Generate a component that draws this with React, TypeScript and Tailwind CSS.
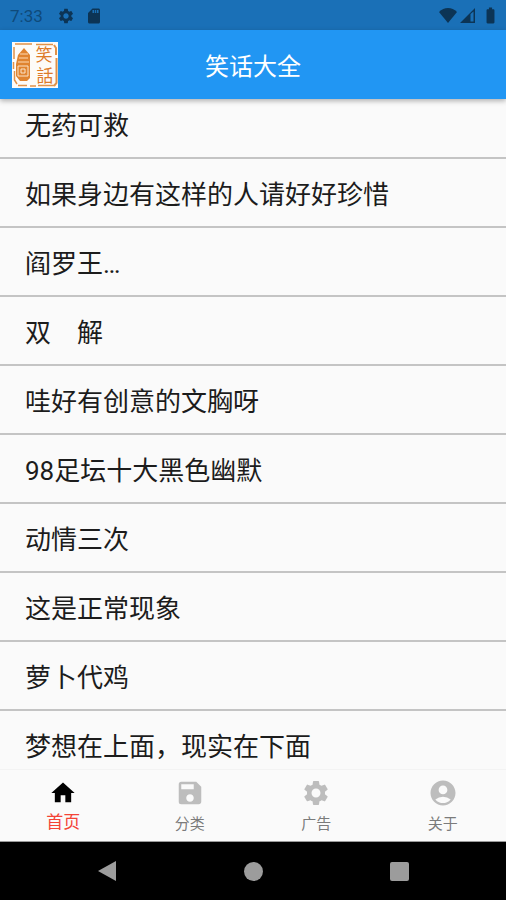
import { useState } from "react";
import { MdAccountCircle, MdBatteryFull, MdHome, MdSave, MdSdStorage, MdSettings } from "react-icons/md";

const jokes = [
  "无药可救",
  "如果身边有这样的人请好好珍惜",
  "阎罗王…",
  "双　解",
  "哇好有创意的文胸呀",
  "98足坛十大黑色幽默",
  "动情三次",
  "这是正常现象",
  "萝卜代鸡",
  "梦想在上面，现实在下面",
];

const tabs = [
  { label: "首页", Icon: MdHome },
  { label: "分类", Icon: MdSave },
  { label: "广告", Icon: MdSettings },
  { label: "关于", Icon: MdAccountCircle },
];

function StatusBar() {
  return (
    <div className="flex h-[30px] shrink-0 items-center bg-[#1a70b7] px-2.5 pt-px text-[#0c3455]">
      <span className="text-[17px] leading-5 text-[#0f4a7a]">7:33</span>
      <MdSettings className="ml-3.5 size-[18px]" />
      <MdSdStorage className="ml-2.5 size-[18px]" />
      <div className="ml-auto flex items-center">
        <svg viewBox="0 0 18 15" className="h-[15px] w-[18px]" fill="currentColor">
          <path d="M9 15 0 4C5-1.2 13-1.2 18 4Z" />
        </svg>
        <svg viewBox="0 0 15 15" className="ml-[3px] size-[15px]">
          <path fillRule="evenodd" fill="currentColor" d="M15 0V15H0ZM10.5 6V13.5H13.5V3.5Z" />
        </svg>
        <MdBatteryFull className="ml-1.5 -mr-1 size-[19px]" />
      </div>
    </div>
  );
}

function Logo() {
  return (
    <svg viewBox="0 0 46 46" className="size-[46px] shrink-0" role="img" aria-label="笑话">
      <rect width="46" height="46" fill="#fdfbf8" />
      <g fill="none" stroke="#e0924a">
        <path d="M3 2H20M24 2.5H41M2 5V17M1.5 20V27M2.5 29V38L5 42" strokeWidth="1.5" />
        <path d="M42 3 44 6V13M44.5 16V41L42 44" strokeWidth="2" />
        <path d="M6 43.5H15M18 44H24M26 43.5H42" strokeWidth="1.5" />
      </g>
      <path d="M12 6 18 13V36L15 39H8L4 34V22L6 13Z" fill="#e08430" />
      <path d="M8 12H16M7 16H16M6 20H17" fill="none" stroke="#f3bd88" strokeWidth="1.5" />
      <path d="M6 24H16V34H6ZM9 27H13V31H9Z" fill="none" stroke="#fbe3c8" strokeWidth="1" />
      <g fill="#dd7a28" fontSize="17" textAnchor="middle">
        <text x="32" y="19">笑</text>
        <text x="33" y="40">話</text>
      </g>
    </svg>
  );
}

export default function App() {
  const [active, setActive] = useState("首页");

  return (
    <div className="flex h-screen flex-col bg-[#fafafa] font-[Roboto,'Noto_Sans_CJK_SC',sans-serif]">
      <StatusBar />

      <header className="relative z-10 grid h-[69px] shrink-0 grid-cols-[46px_1fr_46px] items-center bg-[#2196f3] px-3 shadow-[0_2px_5px_rgba(0,0,0,0.3)]">
        <Logo />
        <h1 className="pt-1 text-center text-[24px] leading-8 text-white">笑话大全</h1>
      </header>

      <main className="min-h-0 flex-1 overflow-hidden">
        {/* first row is partly scrolled under the header */}
        <ul className="-mt-[9px]">
          {jokes.map((joke) => (
            <li key={joke} className="h-[69px] border-b-2 border-[#c4c4c4]">
              <a href="#" className="flex h-full items-center px-[25px] pt-1 text-[26px] leading-9 text-[#1c1c1c]">
                {joke}
              </a>
            </li>
          ))}
        </ul>
      </main>

      <nav className="flex h-[73px] shrink-0 border-t border-[#f3f3f3] border-b border-b-[#9a9a9a]">
        {tabs.map(({ label, Icon }) => {
          const selected = label === active;
          return (
            <button
              key={label}
              type="button"
              onClick={() => setActive(label)}
              className="flex flex-1 flex-col items-center pt-2"
            >
              <Icon className={selected ? "size-[30px] p-px text-black" : "size-[30px] text-[#bdbdbd]"} />
              <span className={selected ? "pt-0.5 text-[17px] leading-6 text-[#f44336]" : "pt-1 text-[15px] leading-6 text-[#7b7b7b]"}>
                {label}
              </span>
            </button>
          );
        })}
      </nav>

      <div className="flex h-[58px] shrink-0 items-center bg-black px-[34px] text-[#9c9c9c]">
        <button type="button" aria-label="返回" className="flex flex-1 justify-center">
          <svg viewBox="0 0 20 20" className="size-5" fill="currentColor">
            <path d="M19 0V20L1 10Z" />
          </svg>
        </button>
        <button type="button" aria-label="主屏幕" className="flex flex-1 justify-center">
          <span className="size-[19px] rounded-full bg-current" />
        </button>
        <button type="button" aria-label="最近任务" className="flex flex-1 justify-center">
          <span className="size-[19px] rounded-xs bg-current" />
        </button>
      </div>
    </div>
  );
}
